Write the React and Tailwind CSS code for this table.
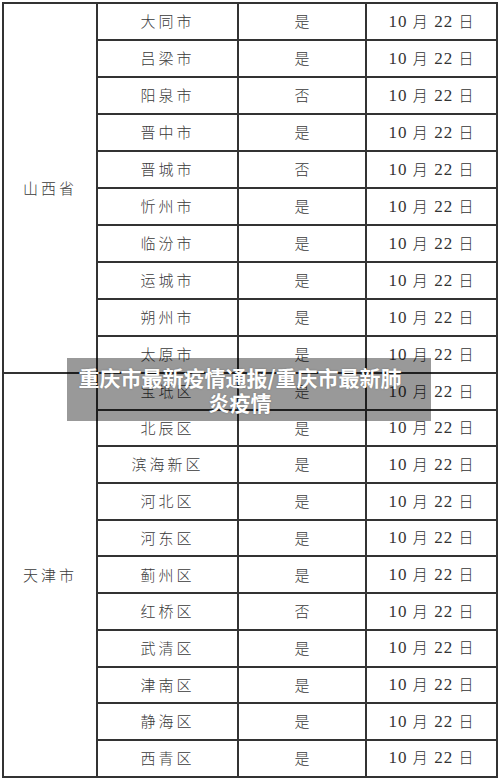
import React from 'react';

const shanxi = ['大同市', '吕梁市', '阳泉市', '晋中市', '晋城市', '忻州市', '临汾市', '运城市', '朔州市', '太原市'];
const shanxiOpen = ['是', '是', '否', '是', '否', '是', '是', '是', '是', '是'];

const tianjin = ['宝坻区', '北辰区', '滨海新区', '河北区', '河东区', '蓟州区', '红桥区', '武清区', '津南区', '静海区', '西青区'];
const tianjinOpen = ['是', '是', '是', '是', '是', '是', '否', '是', '是', '是', '是'];

const cjk = { fontFamily: '"Noto Sans CJK SC", sans-serif' };
const dateFont = { fontFamily: '"Liberation Serif", "Noto Sans CJK SC", serif' };

function Group({ province, cities, flags, rowH }) {
  return (
    <div className="flex">
      <div
        className="w-[94px] shrink-0 flex items-center justify-center border-r-2 border-b-2 border-[#333] text-[15px] tracking-[3px] text-[#3a3a3a] font-light"
        style={cjk}
      >
        {province}
      </div>
      <div className="flex flex-col flex-1">
        {cities.map((city, i) => (
          <div key={city} className={`flex ${rowH}`}>
            <div
              className="w-[141px] flex items-center justify-center border-r-2 border-b-2 border-[#333] text-[15px] tracking-[3px] text-[#3a3a3a] font-light"
              style={cjk}
            >
              {city}
            </div>
            <div
              className="w-[128px] flex items-center justify-center border-r-2 border-b-2 border-[#333] text-[15px] text-[#3a3a3a] font-light"
              style={cjk}
            >
              {flags[i]}
            </div>
            <div className="flex-1 flex items-center justify-center border-r-2 border-b-2 border-[#333] text-[#333]">
              <span className="text-[17px] tracking-[1px] whitespace-pre" style={dateFont}>
                10 <span className="text-[15px] font-light">月</span> 22 <span className="text-[15px] font-light">日</span>
              </span>
            </div>
          </div>
        ))}
      </div>
    </div>
  );
}

export default function App() {
  return (
    <div className="relative w-[500px] h-[780px] bg-white overflow-hidden">
      <div className="ml-[2px] mt-[2px] w-[496px] border-t-2 border-l-2 border-[#333]">
        <Group province="山西省" cities={shanxi} flags={shanxiOpen} rowH="h-[37px]" />
        <Group province="天津市" cities={tianjin} flags={tianjinOpen} rowH="h-[36.7px]" />
      </div>

      <div className="absolute left-[67px] top-[358px] w-[364px] h-[63px] bg-black/40 flex items-center pl-[5px] pr-[23px]">
        <p
          className="w-full text-center text-white font-bold text-[21px] leading-[25px] [text-shadow:0_0_2px_rgba(0,0,0,0.25)]"
          style={cjk}
        >
          重庆市最新疫情通报/重庆市最新肺
          <br />
          炎疫情
        </p>
      </div>
    </div>
  );
}
